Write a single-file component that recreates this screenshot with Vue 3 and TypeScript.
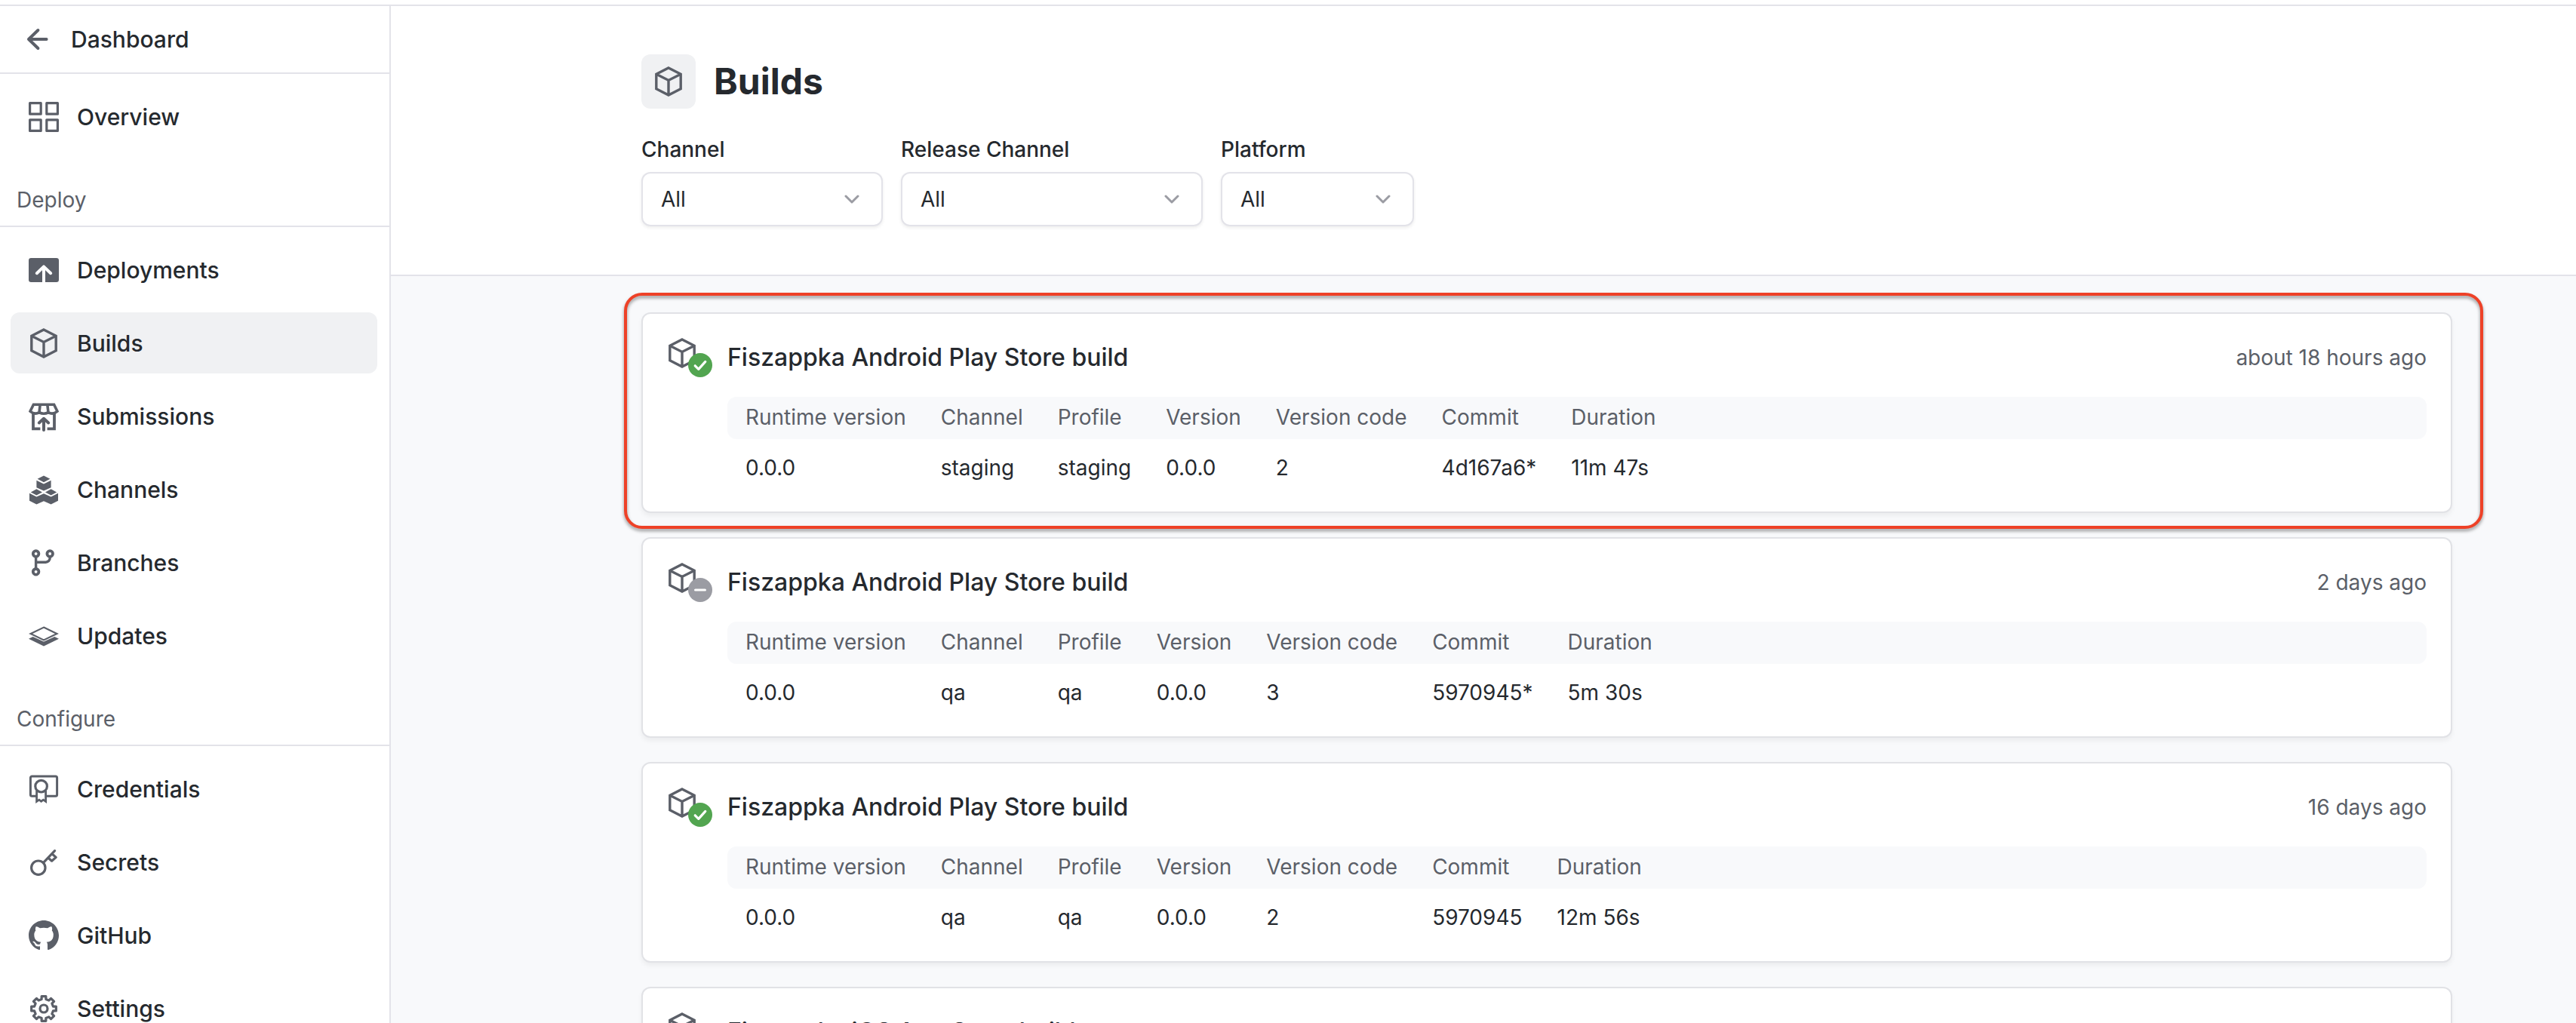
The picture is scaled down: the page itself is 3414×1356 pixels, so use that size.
<script setup lang="ts">
interface Shape {
  d: string
  fill?: boolean
  width?: number
  color?: string
  round?: boolean
}

interface NavItem {
  label: string
  icon: string
  active?: boolean
}

interface Build {
  title: string
  time?: string
  status: 'success' | 'canceled'
  highlighted?: boolean
  cells?: string[]
}

function circle(cx: number, cy: number, r: number): string {
  return `M${cx - r} ${cy}a${r} ${r} 0 1 0 ${2 * r} 0a${r} ${r} 0 1 0 ${-2 * r} 0Z`
}

// Outline of an eight-toothed gear centred in the 20-unit icon box.
function gear(): string {
  const points: string[] = []
  for (let tooth = 0; tooth < 8; tooth++) {
    for (const [radius, offset] of [[6.4, -13], [8.3, -10], [8.3, 10], [6.4, 13]]) {
      const angle = ((tooth * 45 + offset) * Math.PI) / 180
      points.push(`${(10 + radius * Math.cos(angle)).toFixed(2)} ${(10 + radius * Math.sin(angle)).toFixed(2)}`)
    }
  }
  return `M${points.join('L')}Z`
}

const CUBE = 'M10 1 18.1 5.1V14.9L10 19 1.9 14.9V5.1ZM1.9 5.1 10 9.2 18.1 5.1M10 9.2V19'

const icons: Record<string, Shape[]> = {
  overview: [
    { d: 'M.8.8h7.3v7.3H.8ZM11.9.8h7.3v7.3h-7.3ZM.8 11.9h7.3v7.3H.8ZM11.9 11.9h7.3v7.3h-7.3Z', width: 1.6, round: true },
  ],
  deployments: [
    { d: 'M1.6 2h16.8A1.6 1.6 0 0 1 20 3.6v12.8a1.6 1.6 0 0 1-1.6 1.6H1.6A1.6 1.6 0 0 1 0 16.4V3.6A1.6 1.6 0 0 1 1.6 2Z', fill: true },
    { d: 'M10 18V8', width: 2, color: '#fff' },
    { d: 'M5.4 12.1 10 7.7l4.6 4.4', width: 2, color: '#fff', round: true },
  ],
  builds: [{ d: CUBE, width: 1.7 }],
  submissions: [
    { d: 'M3.2 2.1h13.6l2.2 4.5Q16 9.2 13 7.3 10 9 7 7.3 4 9.2 1 6.6ZM7.6 2.1 7 7.3M12.4 2.1 13 7.3', width: 1.8 },
    { d: 'M3 8v10.2h4.7M17 8v10.2h-4.7', width: 1.9 },
    { d: 'M10 19V11.6M6.9 14.2 10 11.4l3.1 2.8', width: 2, round: true },
  ],
  channels: [
    {
      d: 'M10 .8 14.2 2.9 10 5.1 5.8 2.9ZM5.2 3.9 10 6.3 14.8 3.9V8.6L10 10.8 5.2 8.6ZM5.2 9.6 9 11.7 5.2 13.8 1.4 11.7ZM14.8 9.6 18.6 11.7 14.8 13.8 11 11.7ZM.5 12.4 5.2 14.8 10 12.6 14.8 14.8 19.5 12.4V17.4L14.8 19.8 10 17.6 5.2 19.8.5 17.4Z',
      fill: true,
    },
  ],
  branches: [
    { d: circle(4.8, 4, 1.9) + circle(14.1, 4, 1.9) + circle(4.8, 15.9, 1.9), width: 1.9 },
    { d: 'M4.8 6v8M14.1 6v.8a2.8 2.8 0 0 1-2.8 2.8H4.8', width: 1.7 },
  ],
  updates: [
    { d: 'M10 4.3 18.7 8.5 10 12.7 1.3 8.5Z', width: 1.1 },
    { d: 'M0 11.9 2.8 10.5 10 13.7 17.2 10.5 20 11.9 10 16.8Z', fill: true },
  ],
  credentials: [
    { d: 'M5 14.6H2.2a1 1 0 0 1-1-1V2.5a1 1 0 0 1 1-1h15.6a1 1 0 0 1 1 1v11.1a1 1 0 0 1-1 1H11.6', width: 1.5 },
    { d: circle(8.3, 8.1, 3.9), width: 1.6 },
    { d: 'M5.3 11v7.2l1.6-1.1 1.4 1 1.4-1 1.6 1.1V11', width: 1.4 },
  ],
  secrets: [
    { d: circle(6.4, 13.6, 4.6), width: 1.6 },
    { d: 'M9.7 10.3 17.3 2.3M15.6 4.5 18.1 6.7 15.3 9.1 12.9 7', width: 1.6, round: true },
  ],
  github: [
    {
      d: 'M10 0C4.475 0 0 4.475 0 10c0 4.425 2.8625 8.1625 6.8375 9.4875.5.0875.6875-.2125.6875-.475 0-.2375-.0125-1.025-.0125-1.8625C5 17.6125 4.35 16.5375 4.15 15.975c-.1125-.2875-.6-1.175-1.025-1.4125-.35-.1875-.85-.65-.0125-.6625.7875-.0125 1.35.725 1.5375 1.025.9 1.5125 2.3375 1.0875 2.9125.825.0875-.65.35-1.0875.6375-1.3375-2.225-.25-4.55-1.1125-4.55-4.9375 0-1.0875.3875-1.9875 1.025-2.6875-.1-.25-.45-1.275.1-2.65 0 0 .8375-.2625 2.75 1.025.8-.225 1.65-.3375 2.5-.3375s1.7.1125 2.5.3375c1.9125-1.3 2.75-1.025 2.75-1.025.55 1.375.2 2.4.1 2.65.6375.7 1.025 1.5875 1.025 2.6875 0 3.8375-2.3375 4.6875-4.5625 4.9375.3625.3125.675.9125.675 1.85 0 1.3375-.0125 2.4125-.0125 2.75 0 .2625.1875.575.6875.475A10.0125 10.0125 0 0 0 20 10c0-5.525-4.475-10-10-10Z',
      fill: true,
    },
  ],
  settings: [
    { d: gear(), width: 1.6, round: true },
    { d: circle(10, 10, 2.5), width: 1.6 },
  ],
}

const overview: NavItem = { label: 'Overview', icon: 'overview' }

const sections: { title: string; items: NavItem[] }[] = [
  {
    title: 'Deploy',
    items: [
      { label: 'Deployments', icon: 'deployments' },
      { label: 'Builds', icon: 'builds', active: true },
      { label: 'Submissions', icon: 'submissions' },
      { label: 'Channels', icon: 'channels' },
      { label: 'Branches', icon: 'branches' },
      { label: 'Updates', icon: 'updates' },
    ],
  },
  {
    title: 'Configure',
    items: [
      { label: 'Credentials', icon: 'credentials' },
      { label: 'Secrets', icon: 'secrets' },
      { label: 'GitHub', icon: 'github' },
      { label: 'Settings', icon: 'settings' },
    ],
  },
]

const groups = [{ title: '', items: [overview] }, ...sections]

const filters = [
  { id: 'channel', label: 'Channel', size: 'medium' },
  { id: 'release-channel', label: 'Release Channel', size: 'large' },
  { id: 'platform', label: 'Platform', size: 'small' },
]

const columns = ['Runtime version', 'Channel', 'Profile', 'Version', 'Version code', 'Commit', 'Duration']

const builds: Build[] = [
  {
    title: 'Fiszappka Android Play Store build',
    time: 'about 18 hours ago',
    status: 'success',
    highlighted: true,
    cells: ['0.0.0', 'staging', 'staging', '0.0.0', '2', '4d167a6*', '11m 47s'],
  },
  {
    title: 'Fiszappka Android Play Store build',
    time: '2 days ago',
    status: 'canceled',
    cells: ['0.0.0', 'qa', 'qa', '0.0.0', '3', '5970945*', '5m 30s'],
  },
  {
    title: 'Fiszappka Android Play Store build',
    time: '16 days ago',
    status: 'success',
    cells: ['0.0.0', 'qa', 'qa', '0.0.0', '2', '5970945', '12m 56s'],
  },
  {
    title: 'Fiszappka iOS App Store build',
    status: 'success',
  },
]
</script>

<template>
  <div class="app">
    <aside class="sidebar">
      <a class="back" href="#dashboard">
        <svg class="icon" viewBox="0 0 20 20" aria-hidden="true">
          <path d="M15.8 10H4M10.2 4 4 10l6.2 6" fill="none" stroke="currentColor" stroke-width="2" stroke-linecap="round" stroke-linejoin="round" />
        </svg>
        Dashboard
      </a>
      <nav class="nav">
        <template v-for="group in groups" :key="group.title">
          <h2 v-if="group.title" class="nav-heading">{{ group.title }}</h2>
          <ul class="nav-list">
            <li v-for="item in group.items" :key="item.label">
              <a class="nav-item" :class="{ active: item.active }" :href="'#' + item.icon">
                <svg class="icon" viewBox="0 0 20 20" aria-hidden="true">
                  <path
                    v-for="(shape, index) in icons[item.icon]"
                    :key="index"
                    :d="shape.d"
                    :fill="shape.fill ? 'currentColor' : 'none'"
                    :stroke="shape.fill ? 'none' : shape.color ?? 'currentColor'"
                    :stroke-width="shape.width"
                    :stroke-linecap="shape.round ? 'round' : 'butt'"
                    :stroke-linejoin="shape.round ? 'round' : 'miter'"
                  />
                </svg>
                {{ item.label }}
              </a>
            </li>
          </ul>
        </template>
      </nav>
    </aside>

    <main class="main">
      <header class="header">
        <div class="title-row">
          <span class="title-icon">
            <svg class="icon" viewBox="0 0 20 20" aria-hidden="true">
              <path :d="CUBE" fill="none" stroke="currentColor" stroke-width="1.7" />
            </svg>
          </span>
          <h1>Builds</h1>
        </div>
        <form class="filters">
          <div v-for="filter in filters" :key="filter.id" class="filter" :class="filter.size">
            <label :for="filter.id">{{ filter.label }}</label>
            <div class="select-box">
              <select :id="filter.id">
                <option>All</option>
              </select>
              <svg class="chevron" viewBox="0 0 20 12" aria-hidden="true">
                <path d="M2 2l8 8 8-8" fill="none" stroke="currentColor" stroke-width="3" stroke-linecap="round" stroke-linejoin="round" />
              </svg>
            </div>
          </div>
        </form>
      </header>

      <ul class="builds">
        <li v-for="(build, index) in builds" :key="index" class="build">
          <article class="card">
            <span class="status">
              <svg class="icon" viewBox="0 0 20 20" aria-hidden="true">
                <path :d="CUBE" fill="none" stroke="currentColor" stroke-width="1.7" />
              </svg>
              <svg class="badge" :class="build.status" viewBox="0 0 16 16" aria-hidden="true">
                <circle cx="8" cy="8" r="8" fill="currentColor" />
                <path
                  :d="build.status === 'success' ? 'M4.6 8.4 6.9 10.7 11.4 5.7' : 'M4.8 8h6.4'"
                  fill="none"
                  stroke="#fff"
                  stroke-width="1.6"
                  stroke-linecap="round"
                  stroke-linejoin="round"
                />
              </svg>
            </span>
            <div class="details">
              <div class="card-head">
                <h3>{{ build.title }}</h3>
                <time v-if="build.time">{{ build.time }}</time>
              </div>
              <table v-if="build.cells">
                <thead>
                  <tr>
                    <th v-for="column in columns" :key="column" scope="col">{{ column }}</th>
                  </tr>
                </thead>
                <tbody>
                  <tr>
                    <td v-for="(cell, cellIndex) in build.cells" :key="cellIndex">{{ cell }}</td>
                  </tr>
                </tbody>
              </table>
            </div>
          </article>
          <div v-if="build.highlighted" class="highlight"></div>
        </li>
      </ul>
    </main>
  </div>
</template>

<style>
html,
body {
  margin: 0;
  background: #fff;
}
</style>

<style scoped>
.app {
  display: flex;
  box-sizing: border-box;
  height: 100vh;
  padding-top: 6px;
  overflow: hidden;
  color: #25292e;
  font-family: Inter, "Liberation Sans", sans-serif;
  font-size: 28px;
  line-height: 40px;
}

.icon {
  display: block;
  flex: none;
  width: 40px;
  height: 40px;
  color: #5b5f68;
}

.sidebar {
  flex: none;
  box-sizing: border-box;
  width: 518px;
  border-top: 2px solid #e3e3e9;
  border-right: 2px solid #e3e3e9;
}

.back {
  display: flex;
  align-items: center;
  gap: 24px;
  height: 88px;
  padding-left: 30px;
  border-bottom: 2px solid #e3e3e9;
  color: inherit;
  font-size: 30px;
  font-weight: 500;
  text-decoration: none;
}

.nav {
  padding-top: 16px;
}

.nav-heading {
  margin: 0 0 16px;
  padding: 50px 22px 14px;
  border-bottom: 2px solid #e3e3e9;
  color: #5b5f68;
  font-size: 28px;
  font-weight: 400;
  line-height: 40px;
}

.nav-list {
  display: flex;
  flex-direction: column;
  gap: 16px;
  margin: 0;
  padding: 0 16px 0 14px;
  list-style: none;
}

.nav-item {
  display: flex;
  align-items: center;
  gap: 24px;
  height: 81px;
  padding-left: 24px;
  border-radius: 12px;
  color: inherit;
  font-size: 30px;
  font-weight: 500;
  text-decoration: none;
}

.nav-item.active {
  background: #f0f1f3;
}

.main {
  flex: 1;
  min-width: 0;
  border-top: 2px solid #e3e3e9;
  background: #f8f9fb;
}

.header {
  padding: 64px 164px 64px 332px;
  border-bottom: 2px solid #e3e3e9;
  background: #fff;
}

.title-row {
  display: flex;
  align-items: center;
  gap: 24px;
  margin-bottom: 32px;
}

.title-icon {
  display: flex;
  align-items: center;
  justify-content: center;
  width: 72px;
  height: 72px;
  border-radius: 12px;
  background: #f0f1f3;
}

h1 {
  margin: 0;
  font-size: 48px;
  font-weight: 700;
  line-height: 72px;
}

.filters {
  display: flex;
  gap: 24px;
}

.filter {
  display: flex;
  flex-direction: column;
  gap: 8px;
}

.filter.small {
  width: 256px;
}

.filter.medium {
  width: 320px;
}

.filter.large {
  width: 400px;
}

.filter label {
  font-weight: 500;
  line-height: 44px;
}

.select-box {
  display: grid;
  align-items: center;
}

.select-box > * {
  grid-area: 1 / 1;
}

select {
  appearance: none;
  width: 100%;
  height: 72px;
  padding: 0 24px;
  border: 2px solid #e3e3e9;
  border-radius: 12px;
  background: #fff;
  box-shadow: 0 2px 4px rgba(0, 0, 0, 0.07);
  color: inherit;
  font: inherit;
}

.chevron {
  justify-self: end;
  width: 20px;
  height: 12px;
  margin-right: 31px;
  color: #9b9ca3;
  pointer-events: none;
}

.builds {
  display: flex;
  flex-direction: column;
  gap: 32px;
  margin: 0;
  padding: 48px 164px 48px 332px;
  list-style: none;
}

.build {
  position: relative;
}

.card {
  display: flex;
  gap: 20px;
  padding: 32px 32px 20px;
  border: 2px solid #e1e2e6;
  border-radius: 12px;
  background: #fff;
  box-shadow: 0 4px 6px rgba(0, 0, 0, 0.05);
}

.status {
  position: relative;
  flex: none;
  width: 60px;
}

.badge {
  position: absolute;
  top: 20px;
  left: 28px;
  width: 32px;
  height: 32px;
}

.badge.success {
  color: #52a550;
}

.badge.canceled {
  color: #9b9ca3;
}

.details {
  flex: 1;
  min-width: 0;
}

.card-head {
  display: flex;
  align-items: center;
  justify-content: space-between;
  margin-bottom: 26px;
}

h3 {
  margin: 0;
  font-size: 32px;
  font-weight: 500;
  line-height: 52px;
}

time {
  color: #5b5f68;
}

table {
  width: 100%;
  border-collapse: separate;
  border-spacing: 0;
}

th,
td {
  box-sizing: border-box;
  padding: 0 22px 0 24px;
  font-weight: 400;
  text-align: left;
  white-space: nowrap;
}

th {
  height: 56px;
  padding-bottom: 2px;
  background: #f8f9fb;
  color: #5b5f68;
}

th:first-child {
  border-radius: 12px 0 0 12px;
}

th:last-child {
  width: 100%;
  border-radius: 0 12px 12px 0;
}

td {
  height: 76px;
}

.highlight {
  position: absolute;
  top: -26px;
  right: -41px;
  bottom: -21px;
  left: -23px;
  border: 4px solid #ee4127;
  border-radius: 24px;
  filter: drop-shadow(0 3px 2px rgba(0, 0, 0, 0.4));
  pointer-events: none;
}
</style>
